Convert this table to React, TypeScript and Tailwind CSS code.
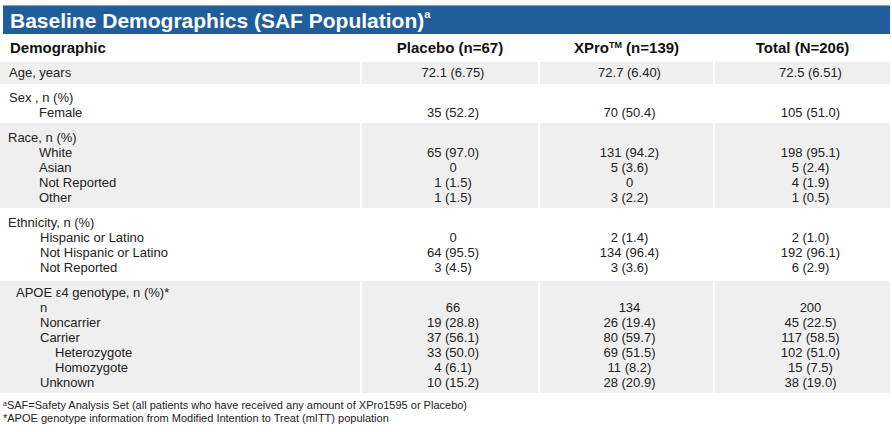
import React from "react";

type Line = { label: React.ReactNode; indent: string; vals: string[] };
type Band = { grey: boolean; pad: string; lines: Line[] };

const bands: Band[] = [
  {
    grey: true,
    pad: "pt-[3px] pb-[4px]",
    lines: [{ label: "Age, years", indent: "pl-[9px]", vals: ["72.1 (6.75)", "72.7 (6.40)", "72.5 (6.51)"] }],
  },
  {
    grey: false,
    pad: "pt-[6px] pb-[3px]",
    lines: [
      { label: "Sex , n (%)", indent: "pl-[9px]", vals: ["", "", ""] },
      { label: "Female", indent: "pl-[39px]", vals: ["35 (52.2)", "70 (50.4)", "105 (51.0)"] },
    ],
  },
  {
    grey: true,
    pad: "pt-[7px] pb-[3px]",
    lines: [
      { label: "Race, n (%)", indent: "pl-[8px]", vals: ["", "", ""] },
      { label: "White", indent: "pl-[39px]", vals: ["65 (97.0)", "131 (94.2)", "198 (95.1)"] },
      { label: "Asian", indent: "pl-[39px]", vals: ["0", "5 (3.6)", "5 (2.4)"] },
      { label: "Not Reported", indent: "pl-[39px]", vals: ["1 (1.5)", "0", "4 (1.9)"] },
      { label: "Other", indent: "pl-[39px]", vals: ["1 (1.5)", "3 (2.2)", "1 (0.5)"] },
    ],
  },
  {
    grey: false,
    pad: "pt-[7px] pb-[6px]",
    lines: [
      { label: "Ethnicity, n (%)", indent: "pl-[8px]", vals: ["", "", ""] },
      { label: "Hispanic or Latino", indent: "pl-[40px]", vals: ["0", "2 (1.4)", "2 (1.0)"] },
      { label: "Not Hispanic or Latino", indent: "pl-[40px]", vals: ["64 (95.5)", "134 (96.4)", "192 (96.1)"] },
      { label: "Not Reported", indent: "pl-[40px]", vals: ["3 (4.5)", "3 (3.6)", "6 (2.9)"] },
    ],
  },
  {
    grey: true,
    pad: "pt-[4px] pb-[3px]",
    lines: [
      { label: "APOE ε4 genotype, n (%)*", indent: "pl-[16px]", vals: ["", "", ""] },
      { label: "n", indent: "pl-[40px]", vals: ["66", "134", "200"] },
      { label: "Noncarrier", indent: "pl-[40px]", vals: ["19 (28.8)", "26 (19.4)", "45 (22.5)"] },
      { label: "Carrier", indent: "pl-[40px]", vals: ["37 (56.1)", "80 (59.7)", "117 (58.5)"] },
      { label: "Heterozygote", indent: "pl-[55px]", vals: ["33 (50.0)", "69 (51.5)", "102 (51.0)"] },
      { label: "Homozygote", indent: "pl-[55px]", vals: ["4 (6.1)", "11 (8.2)", "15 (7.5)"] },
      { label: "Unknown", indent: "pl-[40px]", vals: ["10 (15.2)", "28 (20.9)", "38 (19.0)"] },
    ],
  },
];

const valPad = ["pl-[6px]", "pl-[6px]", "pl-[16px]"];

export default function App() {
  return (
    <div className="w-[892px] h-[432px] bg-white pt-[5px] text-[#222] font-['Liberation_Sans',Arial,sans-serif] overflow-hidden">
      {/* Title bar */}
      <div className="ml-[3px] w-[887px] h-[29px] bg-[#1f5d9b] border-t border-[#7fa6cc] flex items-center pl-[7px]">
        <span className="text-white font-bold text-[21px] leading-none">
          Baseline Demographics (SAF Population)
          <span className="text-[11px] align-text-top">a</span>
        </span>
      </div>

      {/* Header */}
      <div className="grid grid-cols-[360px_176px_173px_175px] gap-x-[2px] w-[890px] h-[28px] items-center font-bold text-[15px] text-[#111]">
        <div className="pl-[10px]">Demographic</div>
        <div className="text-center">Placebo (n=67)</div>
        <div className="text-center">
          XPro<sup className="text-[9px]">TM</sup> (n=139)
        </div>
        <div className="text-center">Total (N=206)</div>
      </div>

      {/* Body */}
      {bands.map((b, i) => {
        const bg = b.grey ? "bg-[#efefef]" : "bg-white";
        return (
          <div key={i} className="grid grid-cols-[360px_176px_173px_175px] gap-x-[2px] w-[890px] text-[13px] leading-[15px]">
            <div className={`${bg} ${b.pad}`}>
              {b.lines.map((l, j) => (
                <div key={j} className={`${l.indent} whitespace-nowrap`}>
                  {l.label}
                </div>
              ))}
            </div>
            {[0, 1, 2].map((c) => (
              <div key={c} className={`${bg} ${b.pad} ${valPad[c]} text-center`}>
                {b.lines.map((l, j) => (
                  <div key={j} className="h-[15px]">
                    {l.vals[c]}
                  </div>
                ))}
              </div>
            ))}
          </div>
        );
      })}

      {/* Footnotes */}
      <div className="mt-[6px] pl-[3px] text-[11px] leading-[13px] text-[#222]">
        <div>
          <sup className="text-[7px]">a</sup>SAF=Safety Analysis Set (all patients who have received any amount of XPro1595 or Placebo)
        </div>
        <div>*APOE genotype information from Modified Intention to Treat (mITT) population</div>
      </div>
    </div>
  );
}
